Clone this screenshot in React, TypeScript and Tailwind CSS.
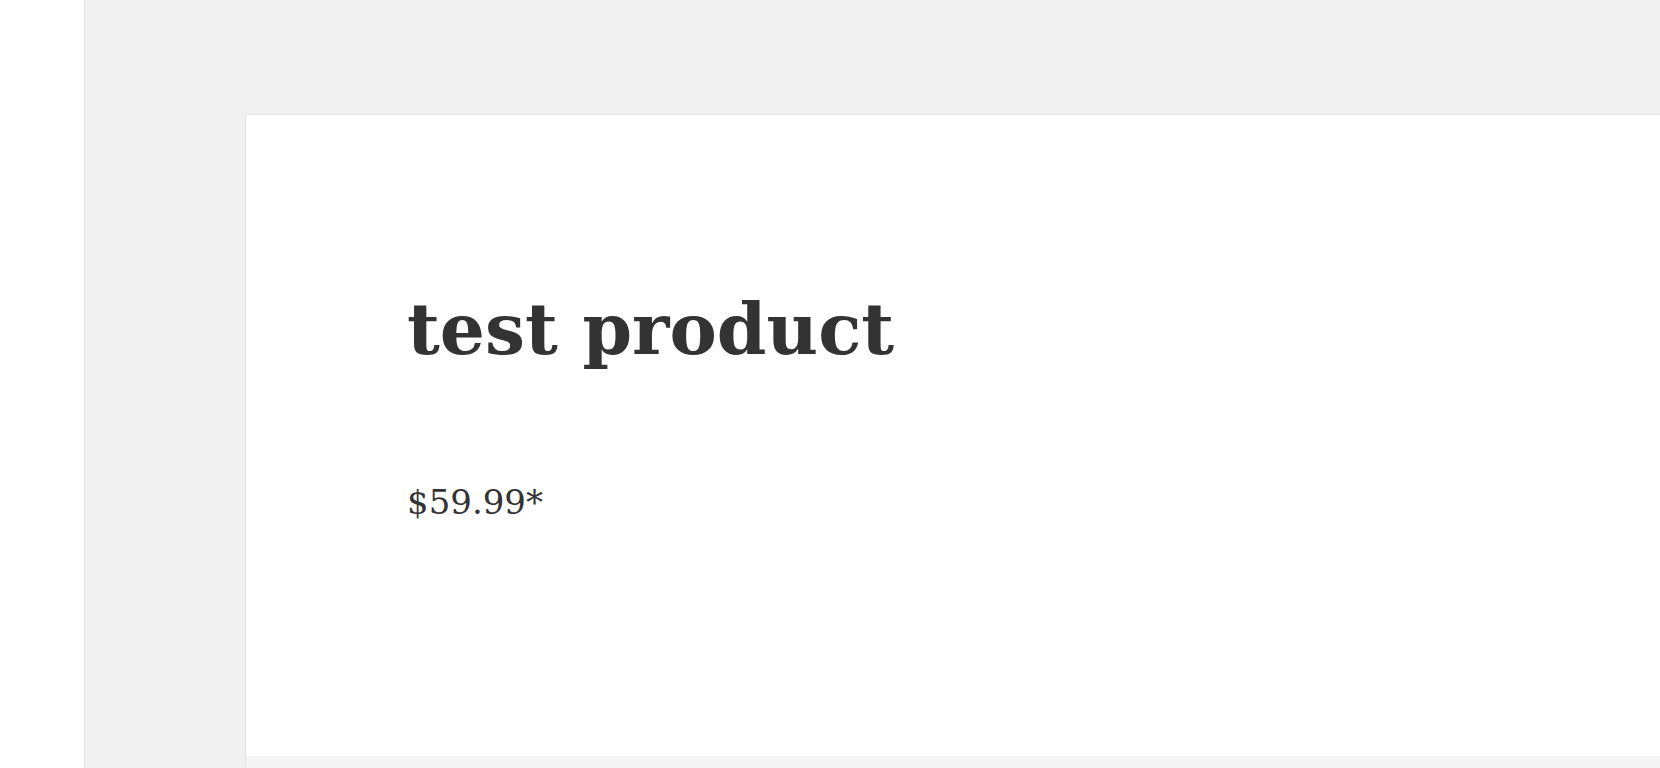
import React from "react";

const App = () => {
  return (
    <div className="flex h-[768px] w-[1660px] overflow-hidden bg-white font-['DejaVu_Serif',serif] text-[#333]">
      <div className="w-[84px] shrink-0 bg-white" />
      <div className="flex-1 border-l border-[#e4e4e4] bg-[#f0f0f0] pl-[160px] pt-[114px]">
        <div className="flex h-[700px] flex-col border-l border-t border-[#e2e2e2] bg-white">
          <div className="h-[641px] pl-[161px] pt-[179px]">
            <h1 className="text-[71px] font-bold leading-none">test product</h1>
            <p className="mt-[120px] text-[34px] leading-none">$59.99*</p>
          </div>
          <div className="flex-1 bg-[#f5f5f5]" />
        </div>
      </div>
    </div>
  );
};

export default App;
